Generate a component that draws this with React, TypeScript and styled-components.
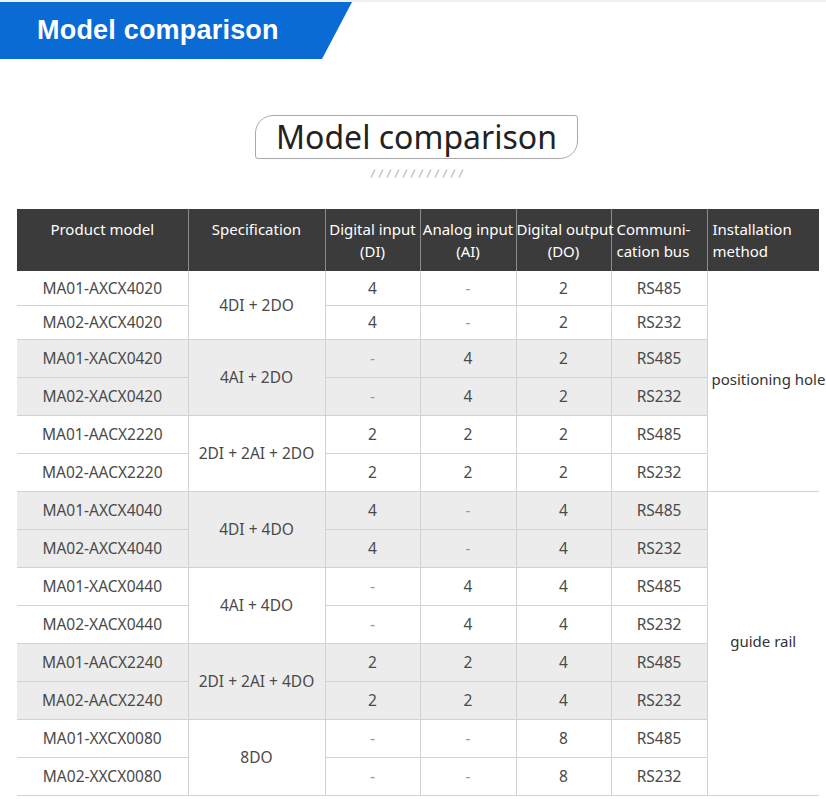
import React from 'react';
import styled, { createGlobalStyle } from 'styled-components';

const GlobalStyle = createGlobalStyle`
  html, body {
    margin: 0;
    padding: 0;
    background: #ffffff;
  }
  body {
    font-family: "Noto Sans", "Open Sans", sans-serif;
    color: #444;
  }
`;

const Page = styled.div`
  width: 826px;
  min-height: 799px;
  border-top: 2px solid #eef1f4;
`;

const Banner = styled.div`
  width: 352px;
  height: 57px;
  display: flex;
  align-items: center;
  padding-left: 37px;
  box-sizing: border-box;
  background: #0a6bd5;
  clip-path: polygon(0 0, 352px 0, 322px 100%, 0 100%);
  color: #fff;
  font-family: "Liberation Sans", Arial, sans-serif;
  font-weight: 700;
  font-size: 27px;
  letter-spacing: 0.2px;
`;

const TitleArea = styled.div`
  display: flex;
  flex-direction: column;
  align-items: center;
  margin-top: 56px;
  padding-left: 7px;
`;

const TitleBox = styled.div`
  width: 323px;
  height: 44px;
  box-sizing: border-box;
  border: 1.5px solid #a9a9a9;
  border-radius: 18px 3px 18px 3px;
  display: flex;
  align-items: center;
  justify-content: center;
  font-size: 32px;
  color: #222;
  padding-bottom: 2px;
`;

const Stripes = styled.svg`
  display: block;
  margin-top: 10px;
`;

const Table = styled.table`
  margin: 31px 0 0 17px;
  width: 802px;
  border-collapse: collapse;
  table-layout: fixed;
  font-size: 15.5px;
`;

const HeadCell = styled.th<{ $align?: string }>`
  background: #3b3b3b;
  color: #fff;
  font-weight: 400;
  font-size: 15px;
  line-height: 22px;
  height: 62px;
  box-sizing: border-box;
  vertical-align: top;
  padding: 9px 0 0 ${(p) => (p.$align === 'left' ? '5px' : '0')};
  text-align: ${(p) => p.$align || 'center'};
  border-left: 1px solid #8a8a8a;
  white-space: nowrap;
  &:first-child {
    border-left: none;
  }
`;

const Row = styled.tr<{ $h: number }>`
  height: ${(p) => p.$h}px;
`;

const Cell = styled.td<{ $shade?: boolean; $dim?: boolean }>`
  background: ${(p) => (p.$shade ? '#ececec' : '#fff')};
  color: ${(p) => (p.$dim ? '#999' : '#4a4a4a')};
  text-align: center;
  vertical-align: middle;
  padding: 0;
  border-bottom: 1px solid #d2d2d2;
  border-left: 1px solid #d2d2d2;
  white-space: nowrap;
  &:first-child {
    border-left: none;
  }
`;

const InstallCell = styled.td<{ $align?: string }>`
  background: #fff;
  text-align: ${(p) => p.$align || 'center'};
  vertical-align: middle;
  border-left: 1px solid #d2d2d2;
  border-bottom: 1px solid #d2d2d2;
  white-space: nowrap;
  overflow: visible;
  font-size: 15px;
  padding: 0 0 4px ${(p) => (p.$align === 'left' ? '4px' : '0')};
  color: #333;
`;

type Model = {
  model: string;
  di: string;
  ai: string;
  dout: string;
  bus: string;
};

type Group = { spec: string; shade: boolean; rows: Model[] };

const groups: Group[] = [
  {
    spec: '4DI + 2DO',
    shade: false,
    rows: [
      { model: 'MA01-AXCX4020', di: '4', ai: '-', dout: '2', bus: 'RS485' },
      { model: 'MA02-AXCX4020', di: '4', ai: '-', dout: '2', bus: 'RS232' },
    ],
  },
  {
    spec: '4AI + 2DO',
    shade: true,
    rows: [
      { model: 'MA01-XACX0420', di: '-', ai: '4', dout: '2', bus: 'RS485' },
      { model: 'MA02-XACX0420', di: '-', ai: '4', dout: '2', bus: 'RS232' },
    ],
  },
  {
    spec: '2DI + 2AI + 2DO',
    shade: false,
    rows: [
      { model: 'MA01-AACX2220', di: '2', ai: '2', dout: '2', bus: 'RS485' },
      { model: 'MA02-AACX2220', di: '2', ai: '2', dout: '2', bus: 'RS232' },
    ],
  },
  {
    spec: '4DI + 4DO',
    shade: true,
    rows: [
      { model: 'MA01-AXCX4040', di: '4', ai: '-', dout: '4', bus: 'RS485' },
      { model: 'MA02-AXCX4040', di: '4', ai: '-', dout: '4', bus: 'RS232' },
    ],
  },
  {
    spec: '4AI + 4DO',
    shade: false,
    rows: [
      { model: 'MA01-XACX0440', di: '-', ai: '4', dout: '4', bus: 'RS485' },
      { model: 'MA02-XACX0440', di: '-', ai: '4', dout: '4', bus: 'RS232' },
    ],
  },
  {
    spec: '2DI + 2AI + 4DO',
    shade: true,
    rows: [
      { model: 'MA01-AACX2240', di: '2', ai: '2', dout: '4', bus: 'RS485' },
      { model: 'MA02-AACX2240', di: '2', ai: '2', dout: '4', bus: 'RS232' },
    ],
  },
  {
    spec: '8DO',
    shade: false,
    rows: [
      { model: 'MA01-XXCX0080', di: '-', ai: '-', dout: '8', bus: 'RS485' },
      { model: 'MA02-XXCX0080', di: '-', ai: '-', dout: '8', bus: 'RS232' },
    ],
  },
];

const cols = [171, 137, 95, 96, 95, 96, 112];

const App: React.FC = () => {
  let index = 0;
  return (
    <Page>
      <GlobalStyle />
      <Banner>Model comparison</Banner>
      <TitleArea>
        <TitleBox>Model comparison</TitleBox>
        <Stripes width="98" height="9" viewBox="0 0 98 9">
          {Array.from({ length: 12 }).map((_, i) => (
            <line
              key={i}
              x1={3 + i * 8}
              y1={8.5}
              x2={7 + i * 8}
              y2={0.5}
              stroke="#c4c4c4"
              strokeWidth={1.6}
            />
          ))}
        </Stripes>
      </TitleArea>
      <Table>
        <colgroup>
          {cols.map((w, i) => (
            <col key={i} style={{ width: w }} />
          ))}
        </colgroup>
        <thead>
          <tr>
            <HeadCell>Product model</HeadCell>
            <HeadCell>Specification</HeadCell>
            <HeadCell>
              Digital input
              <br />
              (DI)
            </HeadCell>
            <HeadCell>
              Analog input
              <br />
              (AI)
            </HeadCell>
            <HeadCell>
              Digital output
              <br />
              (DO)
            </HeadCell>
            <HeadCell $align="left">
              Communi-
              <br />
              cation bus
            </HeadCell>
            <HeadCell $align="left">
              Installation
              <br />
              method
            </HeadCell>
          </tr>
        </thead>
        <tbody>
          {groups.map((g) =>
            g.rows.map((r, j) => {
              const i = index++;
              return (
                <Row key={r.model} $h={i < 2 ? 34 : 38}>
                  <Cell $shade={g.shade}>{r.model}</Cell>
                  {j === 0 && (
                    <Cell $shade={g.shade} rowSpan={2}>
                      {g.spec}
                    </Cell>
                  )}
                  <Cell $shade={g.shade} $dim={r.di === '-'}>
                    {r.di}
                  </Cell>
                  <Cell $shade={g.shade} $dim={r.ai === '-'}>
                    {r.ai}
                  </Cell>
                  <Cell $shade={g.shade}>{r.dout}</Cell>
                  <Cell $shade={g.shade}>{r.bus}</Cell>
                  {i === 0 && (
                    <InstallCell rowSpan={6} $align="left">
                      positioning hole
                    </InstallCell>
                  )}
                  {i === 6 && <InstallCell rowSpan={8}>guide rail</InstallCell>}
                </Row>
              );
            })
          )}
        </tbody>
      </Table>
    </Page>
  );
};

export default App;
